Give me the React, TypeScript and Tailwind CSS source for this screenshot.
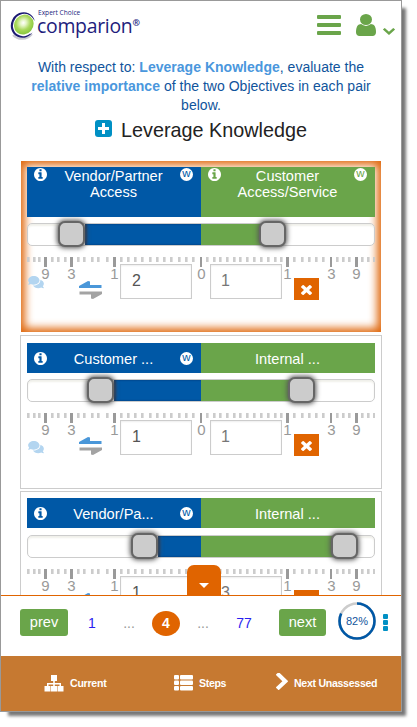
import React from "react";
import { FaComments } from "react-icons/fa";

const INFO =
  "M1152 1376v-160q0-14-9-23t-23-9h-96v-512q0-14-9-23t-23-9h-320q-14 0-23 9t-9 23v160q0 14 9 23t23 9h96v320h-96q-14 0-23 9t-9 23v160q0 14 9 23t23 9h448q14 0 23-9t9-23zm-128-896v-160q0-14-9-23t-23-9h-192q-14 0-23 9t-9 23v160q0 14 9 23t23 9h192q14 0 23-9t9-23zm640 416q0 209-103 385.5t-279.5 279.5-385.5 103-385.5-103-279.5-279.5-103-385.5 103-385.5 279.5-279.5 385.5-103 385.5 103 279.5 279.5 103 385.5z";
const USER =
  "M1536 1399q0 109-62.5 187t-150.5 78h-854q-88 0-150.5-78t-62.5-187q0-85 8.5-160.5t31.5-152 58.5-131 94-89 134.5-34.5q131 128 313 128t313-128q76 0 134.5 34.5t94 89 58.5 131 31.5 152 8.5 160.5zm-256-887q0 159-112.5 271.5t-271.5 112.5-271.5-112.5-112.5-271.5 112.5-271.5 271.5-112.5 271.5 112.5 112.5 271.5z";
const CHEVRON_DOWN =
  "M1683 808l-742 741q-19 19-45 19t-45-19l-742-741q-19-19-19-45.5t19-45.5l166-165q19-19 45-19t45 19l531 531 531-531q19-19 45-19t45 19l166 165q19 19 19 45.5t-19 45.5z";
const CHEVRON_RIGHT =
  "M1363 877l-742 742q-19 19-45 19t-45-19l-166-166q-19-19-19-45t19-45l531-531-531-531q-19-19-19-45t19-45l166-166q19-19 45-19t45 19l742 742q19 19 19 45t-19 45z";
const TIMES =
  "M1490 1322q0 40-28 68l-136 136q-28 28-68 28t-68-28l-294-294-294 294q-28 28-68 28t-68-28l-136-136q-28-28-28-68t28-68l294-294-294-294q-28-28-28-68t28-68l136-136q28-28 68-28t68 28l294 294 294-294q28-28 68-28t68 28l136 136q28 28 28 68t-28 68l-294 294 294 294q28 28 28 68z";

function Glyph({ d, box = "0 0 1792 1792", className }: { d: string; box?: string; className: string }) {
  return (
    <svg viewBox={box} preserveAspectRatio="none" fill="currentColor" className={`block shrink-0 ${className}`}>
      <path d={d} />
    </svg>
  );
}

function Logo() {
  return (
    <div className="mt-[8px] ml-[9px] flex">
      <svg width="27" height="32" viewBox="0 0 27 32" className="block shrink-0">
        <defs>
          <radialGradient id="orb" cx="0.42" cy="0.45" r="0.6">
            <stop offset="0" stopColor="#ffffff" />
            <stop offset="0.25" stopColor="#e4f5c4" />
            <stop offset="0.6" stopColor="#a9d85c" />
            <stop offset="1" stopColor="#84c43a" />
          </radialGradient>
        </defs>
        <path d="M22 25C17 31 8 31.5 3 26" fill="none" stroke="#c9c9d2" strokeWidth="2" />
        <ellipse cx="13" cy="16" rx="12" ry="13" transform="rotate(25 13 16)" fill="#1c1a72" />
        <ellipse cx="13.8" cy="16" rx="10.6" ry="11.4" transform="rotate(35 13.8 16)" fill="#ffffff" />
        <path d="M21 9L27 13L26 22L20 25Z" fill="#ffffff" />
        <ellipse cx="13.8" cy="15.6" rx="9.4" ry="10.4" transform="rotate(40 13.8 15.6)" fill="url(#orb)" />
      </svg>
      <div className="text-[#221c7c] [font-family:'Open_Sans','Noto_Sans',sans-serif]">
        <div className="h-[8px] pl-px text-[6.6px] leading-[8px] whitespace-nowrap">Expert Choice</div>
        <div className="flex text-[19.4px] leading-[18px] tracking-[-0.28px] whitespace-nowrap">
          comparion<span className="-mt-[3px] text-[9px] leading-[18px] font-bold">®</span>
        </div>
      </div>
    </div>
  );
}

// [left edge, tick width, label]
const MAJOR: [number, number, string][] = [
  [17, 3, "9"], [43, 3, "3"], [86, 3, "1"], [173, 2, "0"], [259, 3, "1"], [303, 2, "3"], [328, 3, "9"],
];
const MINOR = [
  0, 6, 11, 24, 30, 37, 50, 56, 64, 70, 79, 93, 100, 107, 114, 122, 129, 136, 143, 151, 158, 165,
  179, 186, 192, 199, 206, 212, 219, 226, 233, 240, 247, 253, 266, 274, 281, 288, 295, 309, 315, 321, 334, 340, 346,
];

function Ruler() {
  return (
    <svg width="348" height="25" viewBox="0 0 348 25" className="block">
      {MINOR.map((x) => (
        <rect key={x} x={x} y="0" width="2.6" height="5" fill="#cccccc" />
      ))}
      {MAJOR.map(([x, w, label]) => (
        <g key={x}>
          <rect x={x} y="0" width={w} height="10" fill="#9a9a9a" />
          <text x={x + 1.5} y="22" textAnchor="middle" fontSize="15" fill="#999999" fontFamily="Liberation Sans, Arial, sans-serif">
            {label}
          </text>
        </g>
      ))}
    </svg>
  );
}

function Handle({ x }: { x: number }) {
  return (
    <div
      className="absolute -top-[3px] h-[26px] w-[27px] rounded-[7px] border-2 border-[#666666] bg-[#cccccc] shadow-[0_0_5px_1px_#555555]"
      style={{ left: x }}
    />
  );
}

function WBadge({ className }: { className: string }) {
  return (
    <span className={`flex h-[13px] w-[13px] shrink-0 items-center justify-center rounded-full bg-white pb-[2px] text-[11.5px] leading-none ${className}`}>
      w
    </span>
  );
}

type Pair = {
  left: string; right: string; a: string; b: string;
  lx: number; rx: number; active?: boolean; raised?: boolean;
};

function PairCard({ left, right, a, b, lx, rx, active, raised }: Pair) {
  const head = active ? "h-[50px] items-start pt-px" : "h-[30px] items-center pt-px";
  return (
    <section
      className={
        active
          ? "mx-[20px] h-[171px] w-[360px] shrink-0 bg-white px-[6px] pt-[6px] shadow-[inset_0_0_9px_4px_#e06a10]"
          : `mx-[19px] h-[154px] w-[362px] shrink-0 border border-[#cccccc] bg-white px-[6px] ${raised ? "pt-[6px]" : "pt-[7px]"}`
      }
    >
      <div className="grid grid-cols-2 text-center text-[14.6px] leading-[16px] text-white">
        <div className={`flex bg-[#0058a6] pr-[8px] pl-[7px] ${head}`}>
          <Glyph d={INFO} box="128 128 1536 1536" className="h-[13px] w-[13px]" />
          <span className="flex-1">{left}</span>
          <WBadge className="text-[#0058a6]" />
        </div>
        <div className={`flex bg-[#6aa54a] pr-[8px] pl-[7px] ${head}`}>
          {active && <Glyph d={INFO} box="128 128 1536 1536" className="h-[13px] w-[13px]" />}
          <span className="flex-1">{right}</span>
          {active && <WBadge className="text-[#6aa54a]" />}
        </div>
      </div>
      <div className={`relative flex h-[23px] rounded-[5px] border border-[#cccccc] bg-white shadow-[inset_0_2px_2px_#f0f0ea] ${raised ? "mt-[7px]" : "mt-[6px]"}`}>
        <div className="h-full bg-[#0058a6] shadow-[inset_2px_0_2px_#002f66]" style={{ marginLeft: lx + 26, width: 147 - lx }} />
        <div className="h-full bg-[#6aa54a]" style={{ width: rx - 172 }} />
        <Handle x={lx - 1} />
        <Handle x={rx - 1} />
      </div>
      <div className="mt-[11px]">
        <Ruler />
      </div>
      <div className="-mt-[18px] flex items-start">
        <FaComments className={`ml-px block h-[14px] w-[16px] shrink-0 text-[#b3d5f0] ${active ? "mt-[11px]" : "mt-[20px]"}`} />
        <svg width="23" height="18" viewBox="0 0 23 18" className="mt-[17px] ml-[35px] block shrink-0">
          <path d="M0 5L9 0L11 .5V4H22.500V7H0Z" fill="#4a97d9" />
          <path d="M23 13L14 18L12 17.500V13.500H.5V10.500H23Z" fill="#a3a3a3" />
        </svg>
        <div className="ml-[18px] h-[35px] w-[72px] shrink-0 border border-[#cccccc] bg-white pl-[11px] text-[16px] leading-[32px] text-[#555555] shadow-[inset_0_1px_2px_#eeeeee]">{a}</div>
        <div className="ml-[18px] h-[35px] w-[72px] shrink-0 border border-[#cccccc] bg-white pl-[10px] text-[16px] leading-[32px] text-[#777777] shadow-[inset_0_1px_2px_#eeeeee]">{b}</div>
        <div className="mt-[14px] ml-[12px] flex h-[22px] w-[25px] shrink-0 items-center justify-center bg-[#e06400] text-white">
          <Glyph d={TIMES} box="302 238 1188 1316" className="h-[11px] w-[11px]" />
        </div>
      </div>
    </section>
  );
}

export default function App() {
  return (
    <div className="h-[727px] w-[417px] overflow-hidden bg-white [font-family:'Liberation_Sans',Arial,sans-serif]">
      <div className="flex h-[712px] w-[402px] flex-col border border-[#999999] bg-white shadow-[6px_6px_3px_-2px_#777777]">
        <header className="flex h-[57px] shrink-0 items-start">
          <Logo />
          <div className="mt-[14px] mr-[6px] ml-auto flex items-start text-[#6aa54a]">
            <div className="flex flex-col gap-[4px]">
              <span className="h-[4px] w-[24px] rounded-[1px] bg-current" />
              <span className="h-[4px] w-[24px] rounded-[1px] bg-current" />
              <span className="h-[4px] w-[24px] rounded-[1px] bg-current" />
            </div>
            <Glyph d={USER} box="256 128 1280 1536" className="-mt-px ml-[15px] h-[22px] w-[20px]" />
            <Glyph d={CHEVRON_DOWN} box="90 533 1612 1035" className="mt-[13px] ml-[7px] h-[7px] w-[12px]" />
          </div>
        </header>

        <main className="flex h-[537px] shrink-0 flex-col overflow-hidden">
          <p className="shrink-0 text-center text-[14px] leading-[19px] tracking-[0.02px] text-[#10549c]">
            With respect to: <b className="text-[#4a97dd]">Leverage Knowledge</b>, evaluate the
            <br />
            <b className="text-[#4a97dd]">relative importance</b> of the two Objectives in each pair
            <br />
            below.
          </p>
          <h1 className="mb-[16px] flex h-[30px] shrink-0 items-center justify-center gap-[9px] text-[19.8px] leading-[30px] text-[#222222]">
            <svg width="17" height="17" viewBox="0 0 17 17" className="-mt-[3px] block">
              <rect width="17" height="17" rx="3" fill="#0090c4" />
              <path d="M7 3h3v4h4v3h-4v4h-3v-4h-4v-3h4z" fill="#fff" />
            </svg>
            Leverage Knowledge
          </h1>
          <PairCard left="Vendor/Partner Access" right="Customer Access/Service" a="2" b="1" lx={31} rx={232} active />
          <div className="h-[3px] shrink-0" />
          <PairCard left="Customer ..." right="Internal ..." a="1" b="1" lx={60} rx={261} />
          <div className="h-[2px] shrink-0" />
          <PairCard left="Vendor/Pa..." right="Internal ..." a="1" b="3" lx={104} rx={304} raised />
        </main>

        <nav className="relative flex h-[61px] shrink-0 items-start border-t border-[#e06400] bg-white text-[14px]">
          <div className="absolute -top-[31px] left-[186px] flex h-[31px] w-[34px] items-center justify-center rounded-t-[7px] bg-[#e06400]">
            <svg width="10" height="5" viewBox="0 0 10 5" className="mt-[10px] block">
              <path d="M0 0H10L5 5Z" fill="#fff" />
            </svg>
          </div>
          <div className="mt-[13px] ml-[19px] h-[27px] w-[48px] rounded-[3px] bg-[#6aa54a] text-center text-[14.6px] leading-[26px] text-white">prev</div>
          <div className="mt-[13px] ml-[16px] w-[16px] text-center leading-[28px] text-[#2a1ef0]">1</div>
          <div className="mt-[13px] ml-[20px] w-[18px] text-center leading-[28px] text-[#999999]">...</div>
          <div className="mt-[15px] ml-[14px] h-[25px] w-[28px] rounded-[50%] bg-[#e06400] text-center leading-[24px] font-bold text-white">4</div>
          <div className="mt-[13px] ml-[14px] w-[18px] text-center leading-[28px] text-[#999999]">...</div>
          <div className="mt-[13px] ml-[21px] w-[22px] text-center leading-[28px] text-[#2a1ef0]">77</div>
          <div className="mt-[13px] ml-[24px] h-[27px] w-[47px] rounded-[3px] bg-[#6aa54a] text-center text-[14.6px] leading-[26px] text-white">next</div>
          <svg width="38" height="38" viewBox="0 0 38 38" className="mt-[6px] ml-[12px] block">
            <circle cx="19" cy="19" r="17.500" fill="none" stroke="#cccccc" strokeWidth="2.600" />
            <circle cx="19" cy="19" r="17.500" fill="none" stroke="#0058a6" strokeWidth="2.600" pathLength="100" strokeDasharray="82 100" transform="rotate(-90 19 19)" />
            <text x="19" y="22.500" textAnchor="middle" fontSize="11" fill="#10549c" fontFamily="Liberation Sans, Arial, sans-serif">82%</text>
          </svg>
          <div className="mt-[18px] ml-[7px] flex flex-col gap-px">
            <span className="h-[5px] w-[5px] rounded-[1px] bg-[#0090c4]" />
            <span className="h-[5px] w-[5px] rounded-[1px] bg-[#0090c4]" />
            <span className="h-[5px] w-[5px] rounded-[1px] bg-[#0090c4]" />
          </div>
        </nav>

        <footer className="flex flex-1 items-center bg-[#c67931] text-[10.6px] font-bold text-white">
          <div className="ml-[43px] flex w-[129px] items-center gap-[6px]">
            <svg width="20" height="17" viewBox="0 0 20 17" fill="#fff" className="block">
              <path d="M7 0h6v6h-2.200v2h6.200v3h2.500v5.500h-6v-5.500h2v-1.500h-4.700v1.500h2.200v5.500h-6v-5.500h2.200v-1.500h-4.700v1.500h2v5.500h-6v-5.500h2.500v-3h6.200v-2h-2.200z" />
            </svg>
            <span className="tracking-[-0.25px]">Current</span>
          </div>
          <div className="flex w-[103px] items-center gap-[6px]">
            <svg width="20" height="16" viewBox="0 0 20 16" fill="#fff" className="-mt-px block">
              <rect x="1" y="0" width="5" height="4.500" rx="1" />
              <rect x="7" y="0" width="13" height="4.500" rx="1" />
              <rect x="1" y="5.500" width="5" height="4.500" rx="1" />
              <rect x="7" y="5.500" width="13" height="4.500" rx="1" />
              <rect x="1" y="11" width="5" height="4.500" rx="1" />
              <rect x="7" y="11" width="13" height="4.500" rx="1" />
            </svg>
            <span className="tracking-[-0.35px]">Steps</span>
          </div>
          <div className="flex items-center gap-[6px] whitespace-nowrap">
            <Glyph d={CHEVRON_RIGHT} box="346 90 1036 1548" className="-mt-[3px] h-[17px] w-[12px]" />
            <span className="tracking-[-0.3px]">Next Unassessed</span>
          </div>
        </footer>
      </div>
    </div>
  );
}
